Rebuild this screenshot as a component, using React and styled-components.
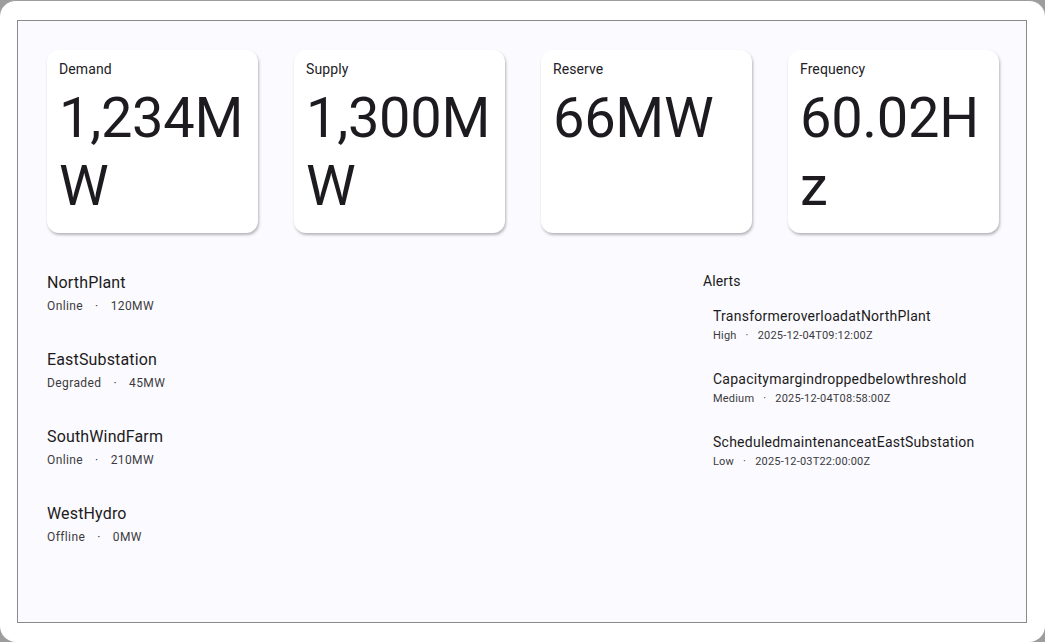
import React from "react";
import styled, { createGlobalStyle } from "styled-components";

const Global = createGlobalStyle`
  html, body { margin: 0; padding: 0; background: #9d9d9d; }
  body { font-family: Roboto, "Noto Sans", "Liberation Sans", sans-serif; }
  * { box-sizing: border-box; }
`;

const Frame = styled.div`
  width: 1045px;
  height: 642px;
  background: #ffffff;
  border-radius: 16px;
  border-top: 1px solid #9d9d9d;
  padding: 19px 18px 19px 17px;
  display: flex;
`;

const Panel = styled.main`
  flex: 1;
  border: 1px solid #8a8a8a;
  background: #fafaff;
  padding: 29px 27px 20px 29px;
  display: flex;
  flex-direction: column;
`;

const Metrics = styled.section`
  display: grid;
  grid-template-columns: repeat(4, 1fr);
  gap: 36px;
`;

const Card = styled.div`
  background: #ffffff;
  border-radius: 12px;
  box-shadow: 1px 2px 3px rgba(0, 0, 0, 0.28);
  padding: 9px 8px 13px 12px;
  display: flex;
  flex-direction: column;
  gap: 5px;
`;

const CardLabel = styled.div`
  font-size: 14px;
  line-height: 20px;
  color: #222126;
  letter-spacing: 0.1px;
`;

const CardValue = styled.div`
  font-size: 56px;
  line-height: 68px;
  letter-spacing: -0.3px;
  color: #1d1b20;
  word-break: break-all;
`;

const Lower = styled.section`
  margin-top: 38px;
  display: grid;
  grid-template-columns: 1fr 296px;
`;

const AssetList = styled.div`
  display: flex;
  flex-direction: column;
  gap: 34px;
`;

const Item = styled.div`
  display: flex;
  flex-direction: column;
  gap: ${(p) => p.$gap}px;
  padding-left: ${(p) => p.$indent || 0}px;
`;

const Title = styled.div`
  font-size: ${(p) => (p.$small ? 14 : 16)}px;
  line-height: ${(p) => (p.$small ? 20 : 24)}px;
  letter-spacing: ${(p) => (p.$small ? 0.25 : 0.15)}px;
  color: #1d1b20;
  white-space: nowrap;
`;

const Meta = styled.div`
  display: flex;
  align-items: center;
  gap: ${(p) => (p.$small ? 9 : 12)}px;
  font-size: ${(p) => (p.$small ? 11 : 12)}px;
  line-height: 16px;
  letter-spacing: ${(p) => (p.$small ? 0.2 : 0.4)}px;
  color: #3c3a40;
  white-space: nowrap;
`;

const AlertsCol = styled.div`
  display: flex;
  flex-direction: column;
`;

const AlertsHeading = styled.h2`
  margin: 0 0 15px 0;
  font-size: 14px;
  line-height: 20px;
  font-weight: 400;
  letter-spacing: 0.1px;
  color: #1d1b20;
`;

const AlertList = styled.div`
  display: flex;
  flex-direction: column;
  gap: 25px;
`;

const metrics = [
  { label: "Demand", value: "1,234MW" },
  { label: "Supply", value: "1,300MW" },
  { label: "Reserve", value: "66MW" },
  { label: "Frequency", value: "60.02Hz" },
];

const assets = [
  { name: "NorthPlant", status: "Online", out: "120MW" },
  { name: "EastSubstation", status: "Degraded", out: "45MW" },
  { name: "SouthWindFarm", status: "Online", out: "210MW" },
  { name: "WestHydro", status: "Offline", out: "0MW" },
];

const alerts = [
  { text: "TransformeroverloadatNorthPlant", sev: "High", time: "2025-12-04T09:12:00Z" },
  { text: "Capacitymargindroppedbelowthreshold", sev: "Medium", time: "2025-12-04T08:58:00Z" },
  { text: "ScheduledmaintenanceatEastSubstation", sev: "Low", time: "2025-12-03T22:00:00Z" },
];

export default function App() {
  return (
    <>
      <Global />
      <Frame>
        <Panel>
          <Metrics>
            {metrics.map((m) => (
              <Card key={m.label}>
                <CardLabel>{m.label}</CardLabel>
                <CardValue>{m.value}</CardValue>
              </Card>
            ))}
          </Metrics>
          <Lower>
            <AssetList>
              {assets.map((a) => (
                <Item key={a.name} $gap={3}>
                  <Title>{a.name}</Title>
                  <Meta>
                    <span>{a.status}</span>
                    <span>·</span>
                    <span>{a.out}</span>
                  </Meta>
                </Item>
              ))}
            </AssetList>
            <AlertsCol>
              <AlertsHeading>Alerts</AlertsHeading>
              <AlertList>
                {alerts.map((a) => (
                  <Item key={a.text} $gap={2} $indent={10}>
                    <Title $small>{a.text}</Title>
                    <Meta $small>
                      <span>{a.sev}</span>
                      <span>·</span>
                      <span>{a.time}</span>
                    </Meta>
                  </Item>
                ))}
              </AlertList>
            </AlertsCol>
          </Lower>
        </Panel>
      </Frame>
    </>
  );
}
